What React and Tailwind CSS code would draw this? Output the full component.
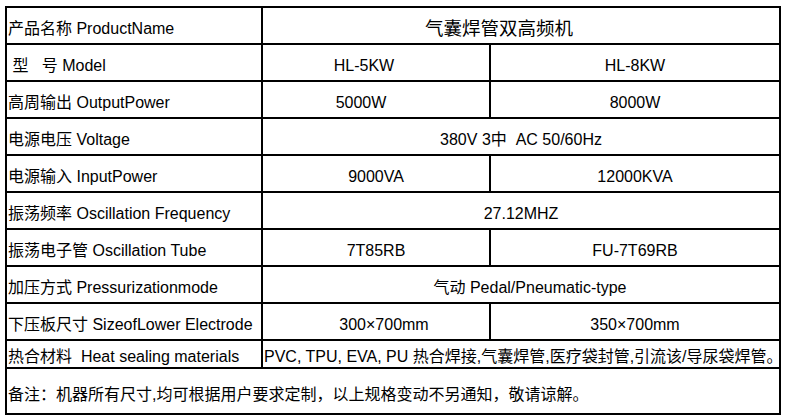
import React from 'react'

const font = "font-['Liberation_Sans','Noto_Sans_CJK_SC',sans-serif]"

// label cell, left aligned
function Label({ children }) {
  return (
    <div className="flex items-center bg-white pl-[1px] pt-[7px] whitespace-pre">
      {children}
    </div>
  )
}

// value cell, centered
function Value({ children, span = '', className = '' }) {
  return (
    <div className={`flex items-center justify-center bg-white pt-[7px] whitespace-pre ${span} ${className}`}>
      {children}
    </div>
  )
}

export default function App() {
  return (
    <div className={`h-[420px] w-[790px] bg-white pl-[5px] pt-[6px] text-[16px] leading-none text-black ${font}`}>
      <div className="grid w-fit grid-cols-[254px_226px_288px] grid-rows-[35px_35px_35px_35px_35px_35px_35px_35px_35px_26px_44px] gap-[2px] bg-black p-[2px]">
        <Label>产品名称 ProductName</Label>
        <Value span="col-span-2" className="pr-[44px] text-[18.5px]">气囊焊管双高频机</Value>

        <Label>{' 型   号 Model'}</Label>
        <Value className="pr-[24px]">HL-5KW</Value>
        <Value>HL-8KW</Value>

        <Label>高周输出 OutputPower</Label>
        <Value className="pr-[30px]">5000W</Value>
        <Value>8000W</Value>

        <Label>电源电压 Voltage</Label>
        <Value span="col-span-2">380V 3中  AC 50/60Hz</Value>

        <Label>电源输入 InputPower</Label>
        <Value>9000VA</Value>
        <Value>12000KVA</Value>

        <Label>振荡频率 Oscillation Frequency</Label>
        <Value span="col-span-2">27.12MHZ</Value>

        <Label>振荡电子管 Oscillation Tube</Label>
        <Value>7T85RB</Value>
        <Value>FU-7T69RB</Value>

        <Label>加压方式 Pressurizationmode</Label>
        <Value span="col-span-2" className="pl-[18px]">气动 Pedal/Pneumatic-type</Value>

        <Label>下压板尺寸 SizeofLower Electrode</Label>
        <Value className="pl-[16px]">300×700mm</Value>
        <Value>350×700mm</Value>

        <div className="flex items-center bg-white pl-[1px] pt-[5px] whitespace-pre">热合材料  Heat sealing materials</div>
        <div className="col-span-2 flex items-center bg-white pl-[1px] pt-[5px] whitespace-pre">
          <span>PVC, TPU, EVA, PU 热合焊接,气囊焊管,医疗袋封管,引流该/导尿袋焊管。</span>
        </div>

        <div className="col-span-3 flex items-center bg-white pl-[1px] pt-[7px] whitespace-nowrap">
          备注：机器所有尺寸,均可根据用户要求定制，以上规格变动不另通知，敬请谅解。
        </div>
      </div>
    </div>
  )
}
